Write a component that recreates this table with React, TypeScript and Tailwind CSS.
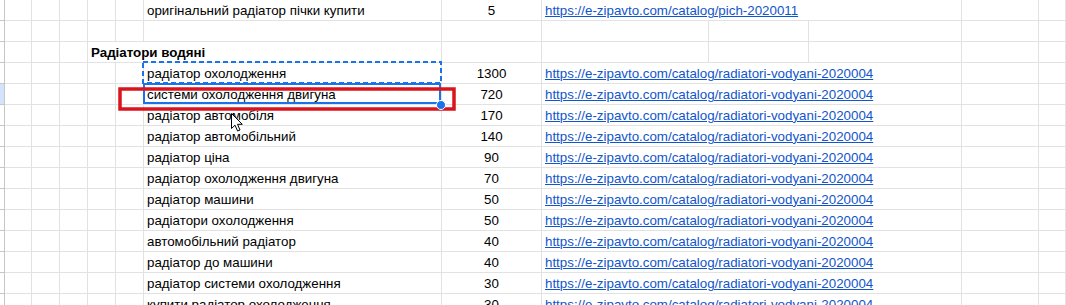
import React from "react";

type Row =
  | { kind: "data"; text: string; num: string; link: string; selected?: boolean }
  | { kind: "empty" }
  | { kind: "heading"; text: string };

const rows: Row[] = [
  { kind: "data", text: "оригінальний радіатор пічки купити", num: "5", link: "https://e-zipavto.com/catalog/pich-2020011" },
  { kind: "empty" },
  { kind: "heading", text: "Радіатори водяні" },
  { kind: "data", text: "радіатор охолодження", num: "1300", link: "https://e-zipavto.com/catalog/radiatori-vodyani-2020004" },
  { kind: "data", text: "системи охолодження двигуна", num: "720", link: "https://e-zipavto.com/catalog/radiatori-vodyani-2020004", selected: true },
  { kind: "data", text: "радіатор автомобіля", num: "170", link: "https://e-zipavto.com/catalog/radiatori-vodyani-2020004" },
  { kind: "data", text: "радіатор автомобільний", num: "140", link: "https://e-zipavto.com/catalog/radiatori-vodyani-2020004" },
  { kind: "data", text: "радіатор ціна", num: "90", link: "https://e-zipavto.com/catalog/radiatori-vodyani-2020004" },
  { kind: "data", text: "радіатор охолодження двигуна", num: "70", link: "https://e-zipavto.com/catalog/radiatori-vodyani-2020004" },
  { kind: "data", text: "радіатор машини", num: "50", link: "https://e-zipavto.com/catalog/radiatori-vodyani-2020004" },
  { kind: "data", text: "радіатори охолодження", num: "50", link: "https://e-zipavto.com/catalog/radiatori-vodyani-2020004" },
  { kind: "data", text: "автомобільний радіатор", num: "40", link: "https://e-zipavto.com/catalog/radiatori-vodyani-2020004" },
  { kind: "data", text: "радіатор до машини", num: "40", link: "https://e-zipavto.com/catalog/radiatori-vodyani-2020004" },
  { kind: "data", text: "радіатор системи охолодження", num: "30", link: "https://e-zipavto.com/catalog/radiatori-vodyani-2020004" },
  { kind: "data", text: "купити радіатор охолодження", num: "30", link: "https://e-zipavto.com/catalog/radiatori-vodyani-2020004" },
];

const cell = "h-[21px] shrink-0 border-b border-r border-[#e2e2e2] flex items-center pt-[2px] px-[3px] whitespace-nowrap overflow-hidden leading-[16px]";

function Header({ selected }: { selected?: boolean }) {
  return (
    <div
      className={`h-[21px] w-[5px] shrink-0 border-b border-r border-[#c4c7c5] ${
        selected ? "bg-[#d3e3fd]" : "bg-white"
      }`}
    />
  );
}

function Narrow() {
  return (
    <>
      <div className={`${cell} w-[27px]`} />
      <div className={`${cell} w-[28px]`} />
      <div className={`${cell} w-[28px]`} />
    </>
  );
}

function Tail() {
  return (
    <>
      <div className={`${cell} w-[77px]`} />
      <div className={`${cell} flex-1`} />
    </>
  );
}

export default function App() {
  return (
    <div className="relative w-[1066px] h-[305px] overflow-hidden bg-white text-black text-[13.33px] font-['Liberation_Sans',Arial,sans-serif]">
      {rows.map((r, i) => {
        if (r.kind === "empty") {
          return (
            <div key={i} className="flex h-[21px]">
              <Header />
              <Narrow />
              <div className={`${cell} w-[28px]`} />
              <div className={`${cell} w-[28px]`} />
              <div className={`${cell} w-[298px]`} />
              <div className={`${cell} w-[100px]`} />
              <div className={`${cell} w-[167px]`} />
              <div className={`${cell} w-[100px]`} />
              <div className={`${cell} w-[153px]`} />
              <Tail />
            </div>
          );
        }
        if (r.kind === "heading") {
          return (
            <div key={i} className="flex h-[21px]">
              <Header />
              <Narrow />
              <div className={`${cell} w-[354px] font-bold`}>{r.text}</div>
              <div className={`${cell} w-[100px]`} />
              <div className={`${cell} w-[167px]`} />
              <div className={`${cell} w-[100px]`} />
              <div className={`${cell} w-[153px]`} />
              <Tail />
            </div>
          );
        }
        return (
          <div key={i} className="flex h-[21px]">
            <Header selected={r.selected} />
            <Narrow />
            <div className={`${cell} w-[28px]`} />
            <div className={`${cell} w-[28px]`} />
            <div className={`${cell} w-[298px]`}>{r.text}</div>
            <div className={`${cell} w-[100px] justify-center`}>{r.num}</div>
            <div className={`${cell} w-[420px]`}>
              <span className="text-[#1155cc] underline decoration-1 underline-offset-[1px]">{r.link}</span>
            </div>
            <Tail />
          </div>
        );
      })}

      <svg
        className="absolute left-0 top-0 pointer-events-none"
        width={1066}
        height={305}
        viewBox="0 0 1066 305"
      >
        {/* copy marquee */}
        <rect x={143} y={62} width={298} height={21} fill="none" stroke="#1a73e8" strokeWidth={2} strokeDasharray="5 3" />
        {/* active selection */}
        <rect x={144} y={84} width={296} height={19} fill="none" stroke="#1a73e8" strokeWidth={2} />
        {/* red annotation */}
        <rect x={120} y={89} width={334} height={20} fill="none" stroke="#d9141c" strokeWidth={3.5} />
        {/* fill handle */}
        <circle cx={441} cy={105} r={4.5} fill="#1a73e8" stroke="#ffffff" strokeWidth={1} />
        {/* mouse cursor */}
        <path
          d="M231.5 113.5 L231.5 128.5 L235 125.2 L237.6 131 L240 130 L237.5 124.3 L242.3 124.3 Z"
          fill="#ffffff"
          stroke="#000000"
          strokeWidth={1}
          strokeLinejoin="round"
        />
      </svg>
    </div>
  );
}
